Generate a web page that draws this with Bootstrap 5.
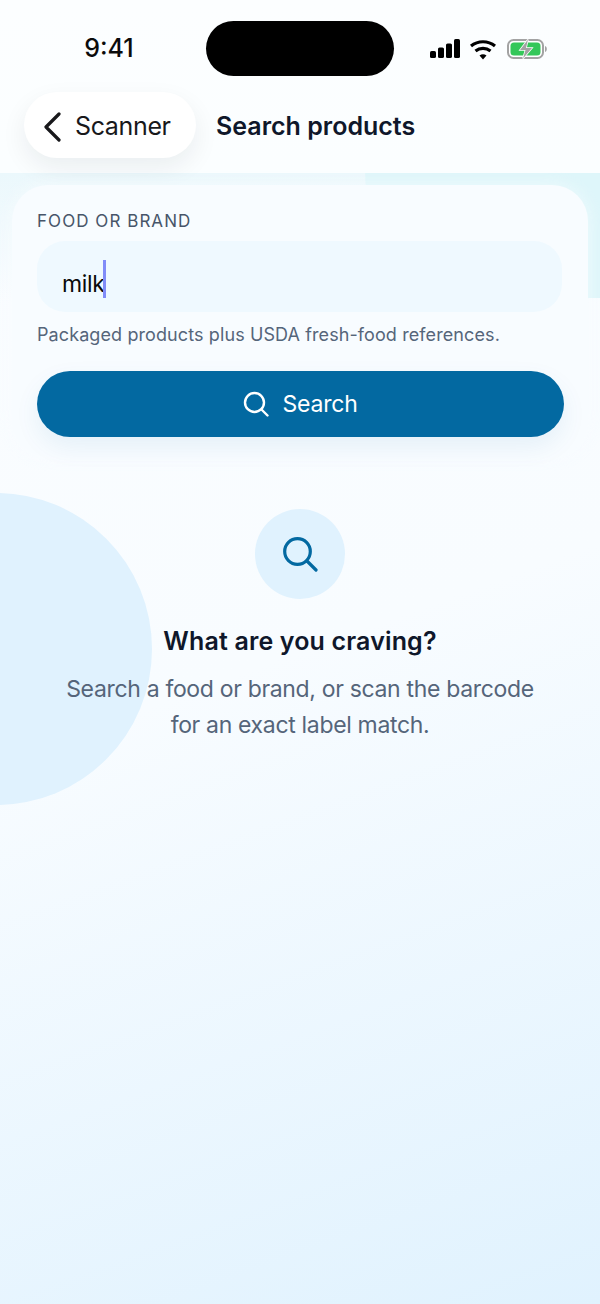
<!DOCTYPE html>
<html lang="en">
<head>
<meta charset="utf-8">
<title>Search products</title>
<link href="https://cdn.jsdelivr.net/npm/bootstrap@5.3.0/dist/css/bootstrap.min.css" rel="stylesheet">
<style>
html,body{margin:0;height:100%}
body{font-family:"Inter","Noto Sans",sans-serif;color:#0f172a;background:#fff}
.app-stage{width:600px;height:1304px;overflow:hidden;background:linear-gradient(160deg,#fbfdff 0%,#f8fcff 50%,#e0f2fe 100%)}
.wash-band{position:absolute;left:0;top:173px;width:600px;height:130px;background:linear-gradient(180deg,#ebf8fc,rgba(248,252,255,0))}
.blob-teal{position:absolute;left:365px;top:100px;width:300px;height:198px;border-radius:0 0 0 70px/0 0 0 130px;background:#def6fa}
.blob-sky{position:absolute;left:-160px;top:493px;width:312px;height:312px;border-radius:50%;background:#e0f2fe}
.top-head{height:173px;background:linear-gradient(180deg,#fcfeff,#fbfeff);z-index:1}
.status-row{height:92px;padding:21px 0 0}
.status-time{width:206px;padding-left:12px;text-align:center;font-size:25px;font-weight:500;color:#0b0b0b;line-height:55px}
.island{width:188px;height:55px;border-radius:28px;background:#000}
.status-icons{padding-left:36px;height:55px}
.nav-row{padding:0 24px;gap:20px}
.back-pill{height:66px;width:172px;border-radius:33px;background:#fff;color:#18181b;font-size:25px;box-shadow:0 10px 26px rgba(15,23,42,.07);padding:4px 0 0 19px;gap:13px;letter-spacing:-.35px}
.head-title{font-size:25px;font-weight:600;color:#0f172a;letter-spacing:0;padding-top:4px}
.form-panel{margin:12px 12px 0;height:272px;border-radius:36px;background:#f8fcff;padding:25px;z-index:1;box-shadow:0 0 18px rgba(248,252,255,.7)}
.field-cap{font-size:17px;line-height:22px;color:#475569;letter-spacing:1.05px;margin:0 0 9px}
.food-box{height:71px;width:525px;border-radius:28px;background:#eff9ff;padding:4px 0 0 25px;font-size:23px;color:#0a0a0a;letter-spacing:-.35px}
.food-text{margin-top:12px}
.caret-bar{width:3px;height:38px;background:#818cf8;margin-left:-2px}
.field-help{font-size:18px;line-height:24px;color:#55657a;margin:11px 0 24px;letter-spacing:.1px;white-space:nowrap}
.go-btn{height:66px;width:527px;border-radius:33px;background:#0369a1;color:#fff;font-size:23px;gap:13px;border:0;box-shadow:0 10px 24px rgba(3,105,161,.08);letter-spacing:-.2px}
.go-btn:hover{background:#0369a1;color:#fff}
.empty-zone{padding-top:52px;z-index:1}
.icon-disc{width:90px;height:90px;border-radius:50%;background:#e0f2fe}
.empty-title{font-size:25px;font-weight:600;line-height:32px;margin:26px 0 0;color:#0f172a;letter-spacing:.15px}
.empty-text{font-size:23px;line-height:36px;color:#55657a;margin:14px 0 0;letter-spacing:-.33px}
</style>
</head>
<body>
<div class="app-stage position-relative">
  <div class="wash-band"></div>
  <div class="blob-teal"></div>
  <div class="blob-sky"></div>
  <header class="top-head position-relative">
    <div class="status-row d-flex">
      <div class="status-time">9:41</div>
      <div class="island"></div>
      <div class="status-icons d-flex align-items-center">
        <svg width="118" height="24" viewBox="0 0 118 24">
          <g fill="#000"><rect x="0" y="14" width="6" height="7" rx="1.6"/><rect x="8" y="10.500" width="6" height="10.500" rx="1.6"/><rect x="16" y="6.500" width="6" height="14.500" rx="1.6"/><rect x="24" y="2" width="6" height="19" rx="1.6"/></g>
          <g fill="none" stroke="#000" stroke-width="3.200"><path d="M41 9a19 19 0 0 1 24 0"/><path d="M45.500 14a12 12 0 0 1 15 0"/></g>
          <path d="M49.500 18.500a6 6 0 0 1 7 0L53 22.500z" fill="#000"/>
          <rect x="78" y="3" width="35" height="18" rx="5.500" fill="#fff" stroke="#a3a3a3" stroke-width="2"/>
          <rect x="80.500" y="5.500" width="30" height="13" rx="3.500" fill="#34c759"/>
          <path d="M115 9v6c1.200-.4 1.800-1.500 1.800-3s-.6-2.600-1.800-3z" fill="#a3a3a3"/>
          <path d="M98 2.500 90 13h5.500l-2.500 8.500L102 11h-6z" fill="#a3a3a3" stroke="#fff" stroke-width="1.500" paint-order="stroke"/>
        </svg>
      </div>
    </div>
    <div class="nav-row d-flex align-items-center">
      <a class="back-pill d-flex align-items-center text-decoration-none" href="#">
        <svg width="19" height="30" viewBox="0 0 19 30" fill="none" stroke="#18181b" stroke-width="3.200" stroke-linecap="round" stroke-linejoin="round"><path d="M16 2 3 15l13 13"/></svg>
        <span>Scanner</span>
      </a>
      <div class="head-title">Search products</div>
    </div>
  </header>
  <section class="form-panel position-relative">
    <p class="field-cap">FOOD OR BRAND</p>
    <div class="food-box d-flex align-items-center"><span class="food-text">milk</span><span class="caret-bar"></span></div>
    <p class="field-help">Packaged products plus USDA fresh-food references.</p>
    <button type="button" class="btn go-btn d-flex align-items-center justify-content-center">
      <svg width="26" height="26" viewBox="0 0 26 26" fill="none" stroke="#fff" stroke-width="2.400" stroke-linecap="round"><circle cx="11.500" cy="11.500" r="9.500"/><path d="m18.500 18.500 6 6"/></svg>
      <span>Search</span>
    </button>
  </section>
  <section class="empty-zone position-relative d-flex flex-column align-items-center text-center">
    <div class="icon-disc d-flex align-items-center justify-content-center">
      <svg width="36" height="36" viewBox="0 0 36 36" fill="none" stroke="#0369a1" stroke-width="3.200" stroke-linecap="round"><circle cx="15.500" cy="15.500" r="12.800"/><path d="m25 25 9 9"/></svg>
    </div>
    <h2 class="empty-title">What are you craving?</h2>
    <p class="empty-text">Search a food or brand, or scan the barcode<br>for an exact label match.</p>
  </section>
</div>
</body>
</html>
